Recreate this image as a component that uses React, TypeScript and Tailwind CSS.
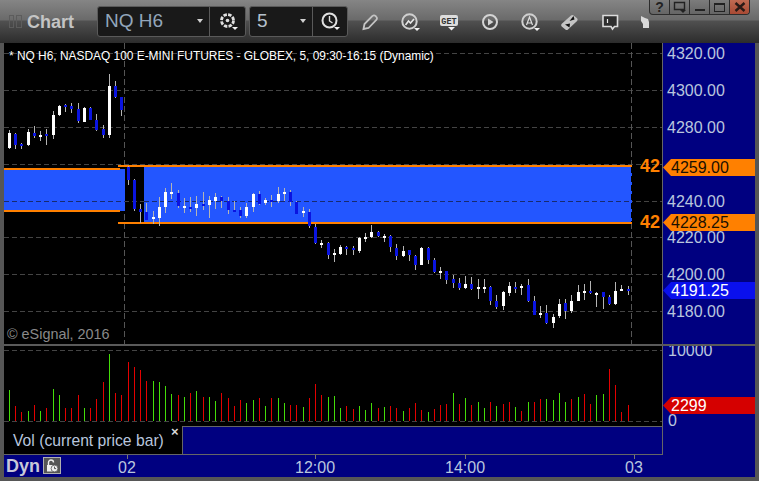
import React from "react";

type Row = [number, number, number, number, number];

// wick top, wick bottom, body top, body bottom, 1 = white candle
const seg = (base: number, rows: Row[]) =>
  rows.map(([a, b, c, d, w]) => ({
    wt: base + a / 3,
    wb: base + b / 3,
    bt: base + c / 3,
    bb: base + d / 3,
    white: w === 1,
  }));

const candles = [
  ...seg(70, [
    [180, 237, 189, 234, 1], [189, 237, 192, 225, 0], [219, 237, 222, 228, 0], [177, 228, 186, 225, 1],
    [168, 204, 189, 198, 0], [183, 213, 195, 201, 1], [177, 225, 192, 198, 0], [123, 207, 135, 195, 1],
    [105, 138, 108, 135, 1], [102, 126, 105, 111, 0], [99, 129, 108, 117, 0], [99, 159, 117, 153, 0],
    [111, 156, 114, 156, 1], [111, 150, 114, 150, 0], [132, 183, 150, 180, 0], [165, 204, 177, 195, 0],
    [12, 204, 48, 195, 1], [33, 84, 48, 81, 0], [81, 138, 81, 120, 0], [288, 345, 291, 330, 0],
    [327, 423, 330, 417, 0], [402, 459, 417, 426, 0], [399, 450, 426, 450, 0], [423, 462, 441, 447, 1],
    [381, 468, 411, 444, 1], [354, 429, 366, 411, 1], [339, 387, 366, 372, 1], [360, 414, 369, 408, 0],
    [384, 429, 408, 414, 1], [381, 426, 411, 417, 0], [378, 438, 402, 414, 1], [366, 420, 402, 408, 0],
    [378, 444, 390, 405, 1], [369, 417, 381, 393, 1], [378, 414, 381, 393, 0], [381, 432, 393, 420, 0],
    [393, 426, 420, 426, 0],
  ]),
  ...seg(160, [
    [141, 174, 150, 168, 0], [129, 174, 141, 168, 1], [99, 156, 102, 141, 1], [93, 135, 102, 132, 0],
    [114, 135, 120, 129, 1], [105, 141, 120, 126, 0], [81, 129, 102, 123, 1], [84, 123, 96, 102, 1],
    [90, 138, 96, 126, 0], [123, 162, 126, 162, 0], [141, 171, 153, 159, 1],
  ]),
  ...seg(190, [
    [57, 114, 66, 108, 0], [102, 162, 111, 159, 0], [150, 174, 159, 165, 1], [156, 207, 159, 195, 0],
    [177, 216, 189, 195, 1], [165, 195, 171, 192, 1], [168, 195, 171, 177, 0], [168, 195, 174, 180, 0],
    [141, 189, 144, 183, 1], [129, 156, 141, 147, 1], [105, 144, 126, 141, 1], [123, 141, 126, 138, 0],
    [132, 156, 138, 144, 1], [135, 186, 138, 171, 0], [162, 210, 174, 198, 0], [168, 201, 183, 198, 1],
    [180, 213, 180, 195, 0], [195, 240, 198, 225, 0], [171, 225, 174, 225, 1], [171, 222, 174, 210, 0],
    [204, 249, 210, 246, 0], [231, 267, 243, 249, 1], [243, 282, 243, 270, 0], [255, 294, 267, 279, 0],
    [264, 300, 279, 294, 0], [258, 297, 282, 294, 1],
  ]),
  ...seg(150, [
    [381, 420, 402, 417, 0], [387, 447, 411, 417, 1], [387, 429, 411, 417, 1], [408, 465, 411, 453, 0],
    [435, 477, 453, 471, 0], [423, 480, 426, 468, 1], [396, 438, 408, 429, 1], [396, 429, 411, 417, 0],
    [402, 435, 408, 414, 1], [387, 456, 405, 453, 0], [438, 495, 453, 495, 0], [468, 504, 489, 495, 1],
    [465, 522, 489, 519, 0], [492, 534, 501, 519, 1], [447, 504, 462, 498, 1], [447, 507, 459, 483, 0],
    [435, 489, 453, 483, 1], [405, 453, 426, 453, 1], [402, 450, 423, 429, 1], [393, 432, 423, 429, 0],
    [426, 471, 429, 435, 1], [426, 477, 426, 441, 0], [435, 465, 441, 462, 0], [396, 465, 423, 462, 1],
    [405, 423, 417, 423, 1], [408, 435, 417, 423, 0],
  ]),
];

const volTops = [
  150, 198, 216, 213, 195, 213, 204, 147, 165, 204, 204, 165, 204, 204, 177, 126, 42, 159, 165, 66, 81, 90, 123, 123,
  126, 138, 162, 165, 171, 159, 153, 171, 171, 183, 159, 174, 198, 180, 189, 180, 174, 198, 174, 174, 189, 195, 195,
  201, 174, 132, 165, 172, 168, 204, 198, 207, 198, 210, 189, 204, 201, 198, 204, 213, 204, 189, 210, 216, 207, 195,
  192, 159, 192, 174, 195, 186, 204, 186, 198, 192, 186, 201, 213, 186, 186, 177, 177, 180, 159, 186, 177, 171, 162,
  192, 165, 162, 87, 135, 216, 195,
];
const volColors =
  "grrgrgrggrrrgrrrgrrrrrrggggrgrgrggrrrrggrgrggrrgrrr" + "gggrrgggrgrrgrrrgrrrgrgrggrgrrgrgrrggggrgrrggr";

const barX = (i: number) => Math.floor(9.3 + 6.25 * i);

const gridRows = [53, 90, 127, 164, 201, 237, 274, 311];

const PriceChart = () => (
  <svg width="658" height="301" viewBox="4 43 658 301" shapeRendering="crispEdges" className="block">
    {gridRows.map((y) => (
      <line key={y} x1="4" x2="662" y1={y + 0.5} y2={y + 0.5} stroke="#444" strokeDasharray="5 3" />
    ))}
    <line x1="124.5" x2="124.5" y1="43" y2="344" stroke="#555" strokeDasharray="6 3" />
    <line x1="631.5" x2="631.5" y1="43" y2="344" stroke="#555" strokeDasharray="6 3" />

    <rect x="4" y="169" width="121" height="42" fill="#2356ff" />
    <rect x="144" y="167" width="488" height="55" fill="#2356ff" />
    <line x1="4" x2="125" y1="201.5" y2="201.5" stroke="#172a70" strokeDasharray="5 3" />
    <line x1="144" x2="631" y1="201.5" y2="201.5" stroke="#172a70" strokeDasharray="5 3" />
    <line x1="631.5" x2="631.5" y1="167" y2="222" stroke="#000" strokeDasharray="6 3" />

    <rect x="4" y="168" width="116" height="2" fill="#ff8000" />
    <rect x="4" y="210" width="116" height="2" fill="#ff8000" />
    <rect x="118" y="165" width="514" height="2" fill="#ff8000" />
    <rect x="118" y="222" width="514" height="2" fill="#ff8000" />

    {candles.map((c, i) => (
      <g key={i}>
        <rect x={barX(i)} y={c.wt} width="1" height={c.wb - c.wt} fill="#b4b4b4" />
        <rect x={barX(i) - 1} y={c.bt} width="3" height={c.bb - c.bt} fill={c.white ? "#ffffff" : "#0a14e0"} />
      </g>
    ))}
  </svg>
);

const VolumeChart = () => (
  <svg width="658" height="80" viewBox="4 346 658 80" shapeRendering="crispEdges" className="block">
    <line x1="4" x2="662" y1="350.5" y2="350.5" stroke="#444" strokeDasharray="5 3" />
    <line x1="4" x2="662" y1="421.5" y2="421.5" stroke="#444" strokeDasharray="5 3" />
    {volTops.map((z, i) => {
      const y = 340 + z / 3;
      return (
        <rect key={i} x={barX(i)} y={y} width="1" height={421 - y} fill={volColors[i] === "g" ? "#44dd08" : "#e40000"} />
      );
    })}
  </svg>
);

const Caret = () => <path d="M14 16h6l-3 3z" fill="#f2f2f2" />;

const GearIcon = () => (
  <svg width="20" height="20" viewBox="0 0 20 20">
    <circle cx="9.5" cy="9.5" r="6" fill="none" stroke="#e0e0e0" strokeWidth="2.8" strokeDasharray="3.4 1.3" />
    <circle cx="9.5" cy="9.5" r="1.8" fill="#e0e0e0" />
    <Caret />
  </svg>
);

const ClockIcon = () => (
  <svg width="20" height="20" viewBox="0 0 20 20">
    <circle cx="9.5" cy="9.5" r="7" fill="none" stroke="#e0e0e0" strokeWidth="2" />
    <path d="M9.5 5v5l3 2" fill="none" stroke="#e0e0e0" strokeWidth="1.4" />
    <Caret />
  </svg>
);

const PencilIcon = () => (
  <svg width="20" height="20" viewBox="0 0 20 20">
    <path d="M3.5 17l1-5L12.5 4a2 2 0 0 1 3 0l.8.8a2 2 0 0 1 0 3L8.5 16z" fill="none" stroke="#c4c4c4" strokeWidth="1.8" />
  </svg>
);

const TrendIcon = () => (
  <svg width="20" height="20" viewBox="0 0 20 20">
    <circle cx="9.5" cy="9.5" r="7.2" fill="none" stroke="#d0d0d0" strokeWidth="2" />
    <path d="M5.5 13l3-4 2 2 3.5-4" fill="none" stroke="#e8e8e8" strokeWidth="1.6" />
    <Caret />
  </svg>
);

const GetIcon = () => (
  <svg width="20" height="20" viewBox="0 0 20 20">
    <rect x="0" y="3" width="18" height="11" rx="2" fill="#dcdcdc" />
    <text x="9" y="12" textAnchor="middle" fontSize="8.5" fontWeight="700" fontFamily="Liberation Mono, monospace" fill="#333">
      GET
    </text>
    <path d="M8 15h7l-3.5 3.5z" fill="#f2f2f2" />
  </svg>
);

const PlayIcon = () => (
  <svg width="20" height="20" viewBox="0 0 20 20">
    <circle cx="10" cy="10" r="7" fill="none" stroke="#d4d4d4" strokeWidth="2" />
    <path d="M8 6.5l5.5 3.5L8 13.5z" fill="#d4d4d4" />
  </svg>
);

const AlertIcon = () => (
  <svg width="20" height="20" viewBox="0 0 20 20">
    <circle cx="9.5" cy="9.5" r="7.2" fill="none" stroke="#d0d0d0" strokeWidth="2" />
    <path d="M6.5 13l3-8 3 8M7.5 11h4" fill="none" stroke="#e0e0e0" strokeWidth="1.2" />
    <Caret />
  </svg>
);

const DiamondIcon = () => (
  <svg width="20" height="20" viewBox="0 0 20 20">
    <path d="M1.5 12L11 3.5a2 2 0 0 1 2.6 0l3.5 2.8a2 2 0 0 1 0 2.6L8 17.5a2 2 0 0 1-2.6 0L1.7 14.5a2 2 0 0 1-.2-2.5z" fill="#c4c4c4" />
    <path d="M5 12.5l5-1-.5 4zM9.5 9l5-1.5L13.5 4z" fill="#111" />
  </svg>
);

const BubbleIcon = () => (
  <svg width="20" height="20" viewBox="0 0 20 20">
    <path d="M3 3.5h14.5v11H14.5L12.5 17l-1.5-2.5H3z" fill="#2e2e2e" stroke="#dcdcdc" strokeWidth="1.6" />
    <path d="M7.5 7v4" stroke="#eee" strokeWidth="1.2" />
  </svg>
);

const HandIcon = () => (
  <svg width="10" height="14" viewBox="0 0 10 14">
    <path d="M1 1l4 2 3 1 1 3v6H3V9L1 6z" fill="#d8d8d8" />
  </svg>
);

const LockIcon = () => (
  <svg width="14" height="14" viewBox="0 0 14 14">
    <path d="M3.5 6V3.5a2.5 2.5 0 0 1 5 0" fill="none" stroke="#eee" strokeWidth="1.4" />
    <rect x="2" y="6" width="6" height="6.5" fill="#eee" />
    <circle cx="9.5" cy="9.5" r="3.4" fill="#eee" stroke="#555" strokeWidth="0.8" />
    <path d="M9.5 7.6v2h1.6" fill="none" stroke="#444" strokeWidth="0.9" />
  </svg>
);

const toolIcons = [
  <PencilIcon key="pencil" />,
  <TrendIcon key="trend" />,
  <GetIcon key="get" />,
  <PlayIcon key="play" />,
  <AlertIcon key="alert" />,
  <DiamondIcon key="diamond" />,
  <BubbleIcon key="bubble" />,
];

const WindowButtons = () => (
  <div className="self-start flex w-[101px] h-[15px] -ml-px rounded-b-[4px] overflow-hidden border border-t-0 border-[#2c2c2c] bg-gradient-to-b from-[#7c7c7c] to-[#656565]">
    <div className="w-[20px] flex items-center justify-center border-r border-[#2c2c2c] text-[#222] text-[14px] font-bold leading-none">?</div>
    <div className="w-[20px] flex items-center justify-center border-r border-[#2c2c2c]">
      <svg width="14" height="12" viewBox="0 0 14 12">
        <path d="M1.5 1.5h10v7h-10z" fill="none" stroke="#222" strokeWidth="1.4" />
        <path d="M7 9h6l-3 3z" fill="#222" />
      </svg>
    </div>
    <div className="w-[20px] flex items-end justify-center pb-[3px] border-r border-[#2c2c2c]">
      <div className="w-[10px] h-[2px] bg-[#222]" />
    </div>
    <div className="w-[20px] flex items-center justify-center border-r border-[#2c2c2c]">
      <div className="w-[11px] h-[9px] border border-[#222] border-t-2" />
    </div>
    <div className="flex-1 flex items-center justify-center bg-gradient-to-b from-[#c06a52] to-[#a84a34]">
      <svg width="12" height="10" viewBox="0 0 12 10">
        <path d="M1.5 1l9 8M10.5 1l-9 8" stroke="#2a1a16" strokeWidth="2.4" />
      </svg>
    </div>
  </div>
);

const Header = () => (
  <div className="relative flex items-center h-[43px] pl-[9px] bg-[linear-gradient(to_bottom,#858585_0px,#6a6a6a_20px,#505050_21px,#2c2c2c_43px)]">
    <div className="w-[5px] h-[13px] border border-[#5c5c5c] mr-[2px]" />
    <div className="w-[6px] h-[13px] border border-[#5c5c5c] mr-[5px]" />
    <div className="w-[70px] text-[18px] font-bold text-[#c4c4c4] leading-none">Chart</div>
    <div className="flex h-[31px] w-[149px] rounded-[3px] border border-[#5a5a5a] bg-[#191919] mb-[1px]">
      <div className="w-[111px] flex items-center pl-[7px] text-[19px] text-[#93a6bb] relative">
        NQ H6
        <span className="ml-auto mr-[6px] w-0 h-0 border-x-[3px] border-x-transparent border-t-[4px] border-t-[#d0d0d0]" />
      </div>
      <div className="flex-1 flex items-center justify-center border-l border-[#5a5a5a]">
        <GearIcon />
      </div>
    </div>
    <div className="flex h-[31px] w-[99px] ml-[3px] rounded-[3px] border border-[#5a5a5a] bg-[#191919] mb-[1px]">
      <div className="w-[62px] flex items-center pl-[7px] text-[19px] text-[#b4c0cc]">
        5
        <span className="ml-auto mr-[6px] w-0 h-0 border-x-[3px] border-x-transparent border-t-[4px] border-t-[#d0d0d0]" />
      </div>
      <div className="flex-1 flex items-center justify-center border-l border-[#5a5a5a]">
        <ClockIcon />
      </div>
    </div>
    <div className="flex ml-[2px]">
      {toolIcons.map((icon, i) => (
        <div key={i} className="w-[40px] flex justify-center">
          {icon}
        </div>
      ))}
    </div>
    <div className="ml-[10px]">
      <HandIcon />
    </div>
    <WindowButtons />
  </div>
);

const PriceTag = ({ label, className }: { label: string; className: string }) => (
  <div className={`absolute left-0 w-[92px] h-[17px] pl-[8px] flex items-center text-[16px] leading-none [clip-path:polygon(0_50%,8px_0,100%_0,100%_100%,8px_100%)] ${className}`}>
    {label}
  </div>
);

// 4260.00 sits under the 4259.00 tag in the picture, so its row stays empty
const prices = ["4320.00", "4300.00", "4280.00", "", "4240.00", "4220.00", "4200.00", "4180.00"];

const TimeTick = ({ label, className }: { label: string; className: string }) => (
  <div className={`w-[40px] flex flex-col items-center ${className}`}>
    <div className="w-px h-[4px] bg-[#777]" />
    <div className="text-[16px] leading-none mt-[1px] text-[#b9c6de]">{label}</div>
  </div>
);

export default function App() {
  return (
    <div className="w-[759px] h-[481px] overflow-hidden flex flex-col bg-[#565656] font-['Liberation_Sans',Arial,sans-serif]">
      <Header />
      <div className="h-[434px] mx-[4px] flex flex-col bg-[#000080]">
        <div className="flex h-[301px]">
          <div className="relative w-[659px] border-r border-[#666] bg-black overflow-hidden">
            <PriceChart />
            <div className="absolute left-[5px] top-[6px] text-[11.92px] leading-[14px] text-white whitespace-nowrap">
              * NQ H6, NASDAQ 100 E-MINI FUTURES - GLOBEX, 5, 09:30-16:15 (Dynamic)
            </div>
            <div className="absolute left-[3px] top-[283px] text-[14.4px] leading-[16px] text-[#8a8a8a] whitespace-nowrap">
              © eSignal, 2016
            </div>
            <div className="absolute left-[636px] top-[113px] text-[18px] leading-[20px] font-bold text-[#ff8000]">42</div>
            <div className="absolute left-[636px] top-[169px] text-[18px] leading-[20px] font-bold text-[#ff8000]">42</div>
          </div>
          <div className="relative w-[92px] overflow-hidden">
            <div className="flex flex-col mt-[-7.5px] pl-[4px] text-[16px] text-[#b9c6de]">
              {prices.map((p, i) => (
                <div key={i} className="h-[36.9px] shrink-0 flex items-center leading-none">
                  {p}
                </div>
              ))}
            </div>
            <PriceTag label="4259.00" className="top-[116px] bg-[#ff8000] text-[#1a1000]" />
            <PriceTag label="4228.25" className="top-[171px] bg-[#ff8000] text-[#1a1000]" />
            <PriceTag label="4191.25" className="top-[239px] bg-[#0a10ee] text-white" />
          </div>
        </div>
        <div className="h-[2px] bg-[#5a5a5a]" />
        <div className="flex h-[80px]">
          <div className="w-[659px] border-r border-[#666] bg-black overflow-hidden">
            <VolumeChart />
          </div>
          <div className="relative w-[92px] overflow-hidden">
            <div className="flex flex-col justify-between h-[82px] -mt-px pl-[5px] text-[16px] leading-[12px] text-[#b9c6de]">
              <div>10000</div>
              <div>0</div>
            </div>
            <PriceTag label="2299" className="top-[51px] bg-[#d50000] text-white" />
          </div>
        </div>
        <div className="flex h-[29px]">
          <div className="flex w-[659px] border-b border-[#666]">
            <div className="relative w-[179px] h-[28px] bg-black border-r border-[#666] pl-[9px] pt-[1px] flex items-center text-[15.7px] text-[#b9c6de] whitespace-nowrap">
              Vol (current price bar)
              <span className="absolute left-[167px] top-[0px] text-[13px] leading-[12px] font-bold text-[#d8d8d8]">×</span>
            </div>
            <div className="flex-1 border-t border-r border-[#666]" />
          </div>
        </div>
        <div className="flex h-[22px]">
          <div className="flex items-center w-[57px] pl-[2px]">
            <span className="text-[18px] font-bold leading-none text-[#c8c8d8] w-[37px]">Dyn</span>
            <div className="w-[18px] h-[17px] flex items-center justify-center bg-[#555] border border-[#b0b0b0] mb-[1px]">
              <LockIcon />
            </div>
          </div>
          <TimeTick label="02" className="ml-[46px]" />
          <TimeTick label="12:00" className="ml-[148px]" />
          <TimeTick label="14:00" className="ml-[110px]" />
          <TimeTick label="03" className="ml-[129px]" />
        </div>
      </div>
    </div>
  );
}
